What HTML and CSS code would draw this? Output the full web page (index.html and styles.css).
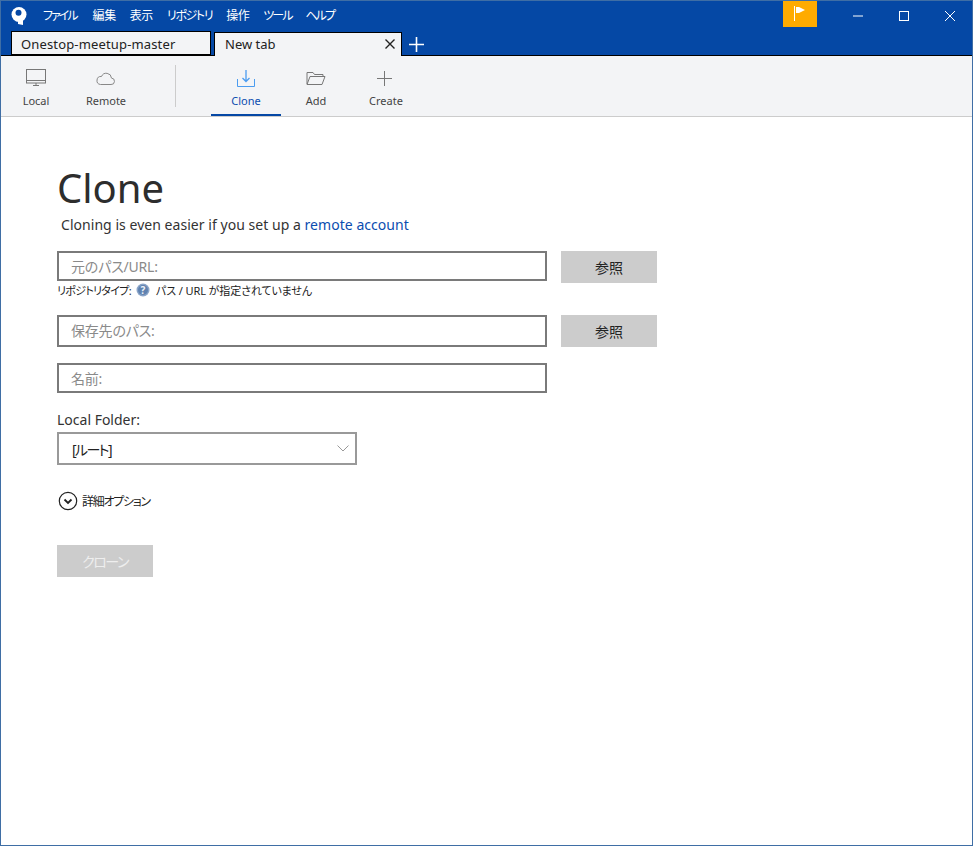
FILE: index.html
```html
<!DOCTYPE html>
<html lang="ja">
  <head>
    <title>Sourcetree</title>
    <link rel="stylesheet" href="styles.css">
  </head>
  <body>
    <div class="window">
      <div class="titlebar">
        <svg class="logo" width="16" height="18" viewBox="0 0 16 18">
          <circle cx="8" cy="7.500" r="7.500" fill="#fff"/>
          <path d="M3 12l4 2v3l5 1v-6z" fill="#fff"/>
          <circle cx="7.500" cy="5.800" r="3" fill="#0548a5"/>
        </svg>
        <nav class="menu">
          <span class="kana kana-first">ファイル</span>
          <span class="kanji">編集</span>
          <span class="kanji">表示</span>
          <span class="kana-long">リポジトリ</span>
          <span class="kanji">操作</span>
          <span class="kana">ツール</span>
          <span class="kana">ヘルプ</span>
        </nav>
        <div class="flag">
          <svg width="12" height="15" viewBox="0 0 12 15">
            <path d="M0.500 0v15" stroke="#fff" fill="none"/>
            <path d="M2 1h3l6 3-6 3H2z" fill="#fff"/>
          </svg>
        </div>
        <div class="winbtns">
          <svg width="12" height="12" viewBox="0 0 12 12"><path d="M1 6h10" stroke="#fff" fill="none"/></svg>
          <svg width="12" height="12" viewBox="0 0 12 12"><rect x="1.500" y="1.500" width="9" height="9" stroke="#fff" fill="none"/></svg>
          <svg width="12" height="12" viewBox="0 0 12 12"><path d="M1 1l10 10M11 1L1 11" stroke="#fff" fill="none"/></svg>
        </div>
      </div>

      <div class="tabstrip">
        <div class="tab">Onestop-meetup-master</div>
        <div class="tab tab-active">
          <span>New tab</span>
          <svg width="12" height="12" viewBox="0 0 12 12"><path d="M1.500 1.500l9 9M10.500 1.500l-9 9" stroke="#222" stroke-width="1.400" fill="none"/></svg>
        </div>
        <svg class="addtab" width="15" height="15" viewBox="0 0 15 15"><path d="M7.500 0v15M0 7.500h15" stroke="#fff" stroke-width="1.600" fill="none"/></svg>
      </div>

      <div class="toolbar">
        <div class="toolgroup">
          <div class="tool">
            <div class="toolicon">
              <svg width="20" height="18" viewBox="0 0 20 18" fill="none" stroke="#777">
                <rect x="0.500" y="0.500" width="19" height="13.500"/>
                <path d="M0.500 11.500h19M7 16.500h6M10 14v2.500"/>
              </svg>
            </div>
            <span>Local</span>
          </div>
          <div class="tool">
            <div class="toolicon nudge-remote">
              <svg width="19" height="14" viewBox="0 0 19 14" fill="none" stroke="#888">
                <path d="M4.500 13.500h10.500a3.200 3.200 0 0 0 .5-6.400 5.200 5.200 0 0 0-10-1.600 4 4 0 0 0-1 8z"/>
              </svg>
            </div>
            <span>Remote</span>
          </div>
        </div>
        <div class="toolsep"></div>
        <div class="toolgroup">
          <div class="tool tool-on">
            <div class="toolicon">
              <svg width="18" height="17" viewBox="0 0 18 17" fill="none" stroke="#4b9cf0">
                <path d="M0.500 9v7.500h17V9"/>
                <path d="M9 0v11M5.500 8l3.500 3.500L12.500 8" stroke-width="1.300"/>
              </svg>
            </div>
            <span>Clone</span>
          </div>
          <div class="tool">
            <div class="toolicon">
              <svg width="20" height="14" viewBox="0 0 20 14" fill="none" stroke="#777">
                <path d="M1 13V1.500h6l1.500 2H17V5"/>
                <path d="M1 13.500l3-8h15l-3 8z"/>
              </svg>
            </div>
            <span>Add</span>
          </div>
          <div class="tool">
            <div class="toolicon nudge-create">
              <svg width="15" height="15" viewBox="0 0 15 15" fill="none" stroke="#777">
                <path d="M7.500 0v15M0 7.500h15"/>
              </svg>
            </div>
            <span>Create</span>
          </div>
        </div>
      </div>

      <main class="content">
        <h1>Clone</h1>
        <p class="hint">Cloning is even easier if you set up a <a href="#">remote account</a></p>

        <div class="row">
          <input class="field field-short" placeholder="元のパス/URL:">
          <button class="browse">参照</button>
        </div>
        <div class="repotype">
          <span class="repolabel">リポジトリタイプ:</span>
          <svg width="14" height="14" viewBox="0 0 14 14">
            <circle cx="7" cy="7" r="6.500" fill="#8aa4c8"/>
            <circle cx="7" cy="7" r="5" fill="#5f82b0"/>
            <text x="7" y="10.500" text-anchor="middle" class="qmark">?</text>
          </svg>
          <span class="repostatus">パス / URL が指定されていません</span>
        </div>
        <div class="row">
          <input class="field" placeholder="保存先のパス:">
          <button class="browse">参照</button>
        </div>
        <div class="row row-name">
          <input class="field field-short" placeholder="名前:">
        </div>

        <label class="folderlabel">Local Folder:</label>
        <div class="select">
          <span class="selected">[ルート]</span>
          <svg width="12" height="7" viewBox="0 0 12 7"><path d="M0.500 0.500L6 6l5.500-5.500" stroke="#999" fill="none"/></svg>
        </div>

        <div class="advanced">
          <svg width="20" height="20" viewBox="0 0 20 20" fill="none" stroke="#222">
            <circle cx="10" cy="10" r="8.700" stroke-width="1.200"/>
            <path d="M6.500 8.500L10 12l3.500-3.500" stroke-width="1.800"/>
          </svg>
          <span>詳細オプション</span>
        </div>

        <button class="clonebtn" disabled>クローン</button>
      </main>
    </div>
  </body>
</html>
```

FILE: styles.css
```css
* {
  box-sizing: border-box;
}

html, body {
  margin: 0;
  height: 100%;
}

body {
  font-family: "Noto Sans", "Noto Sans CJK JP", sans-serif;
  font-feature-settings: "palt";
  background-color: #fff;
  color: #333;
}

.window {
  height: 846px;
  border: 1px solid #3f6ea5;
  display: flex;
  flex-direction: column;
}

.titlebar {
  background-color: #0548a5;
  height: 31px;
  flex: none;
  display: flex;
  align-items: flex-start;
  color: #fff;
}

.logo {
  margin: 6px 0 0 10px;
}

.menu {
  display: flex;
  gap: 14px;
  margin: 6px 0 0 16px;
  font-size: 12px;
  line-height: 18px;
  flex: 1;
}

.kana {
  letter-spacing: -2px;
}

.kana-first {
  margin-right: 2px;
}

.kana-long {
  letter-spacing: -1.400px;
}

.kanji {
  letter-spacing: -0.400px;
}

.flag {
  width: 34px;
  height: 26px;
  background-color: #ffab00;
  display: flex;
  justify-content: center;
  align-items: flex-start;
  padding-top: 5px;
}

.flag svg {
  margin-left: -1px;
}

.winbtns {
  display: flex;
  gap: 34px;
  padding: 9px 16px 0 35px;
}

.tabstrip {
  background-color: #0548a5;
  height: 24px;
  flex: none;
  display: flex;
  align-items: flex-end;
  padding-left: 10px;
  gap: 3px;
  border-bottom: 1px solid #000;
}

.tab {
  width: 200px;
  height: 24px;
  background-color: #f3f4f6;
  border: 1px solid #000;
  font-size: 13px;
  line-height: 24px;
  letter-spacing: 0.150px;
  padding-left: 9px;
  color: #222;
}

.tab-active {
  width: 188px;
  border-bottom: 0;
  padding-left: 10px;
  padding-right: 5px;
  padding-bottom: 1px;
  margin-bottom: -1px;
  letter-spacing: 0;
  display: flex;
  justify-content: space-between;
  align-items: center;
}

.addtab {
  margin: 0 0 3px 4px;
}

.toolbar {
  background-color: #f3f4f6;
  height: 61px;
  flex: none;
  display: flex;
  border-bottom: 1px solid #ccc;
}

.toolgroup {
  display: flex;
}

.tool {
  width: 70px;
  height: 60px;
  display: flex;
  flex-direction: column;
  align-items: center;
  padding-top: 12px;
  gap: 5px;
  font-size: 11px;
  line-height: 15px;
  color: #444;
}

.toolicon {
  height: 20px;
  display: flex;
  align-items: center;
  justify-content: center;
}

.nudge-remote {
  margin-right: 2px;
}

.nudge-create {
  margin-right: 3px;
}

.tool-on {
  border-bottom: 2px solid #0548a5;
  color: #0b4db0;
}

.toolsep {
  width: 1px;
  height: 42px;
  margin: 9px 35px 0 34px;
  background-color: #ccc;
}

.content {
  flex: 1;
  padding: 44px 0 0 56px;
}

h1 {
  margin: 0;
  font-size: 40px;
  font-weight: 400;
  line-height: 54px;
  color: #2d2d2d;
}

.hint {
  margin: 0 0 16px 4px;
  font-size: 14px;
  line-height: 20px;
  letter-spacing: 0.040px;
  color: #333;
}

.hint a {
  color: #0b4db0;
  text-decoration: none;
}

.row {
  display: flex;
  gap: 14px;
  align-items: flex-start;
}

.field {
  width: 490px;
  height: 32px;
  border: 2px solid #7a7a7a;
  padding: 0 12px 2px;
  font: inherit;
  font-size: 14px;
  font-feature-settings: "palt";
  letter-spacing: -0.200px;
  background-color: #fff;
  outline: none;
}

.field-short {
  height: 30px;
  padding-bottom: 0;
}

.field::placeholder {
  color: #8a8a8a;
  opacity: 1;
}

.browse {
  width: 96px;
  height: 32px;
  border: 0;
  background-color: #ccc;
  font: inherit;
  font-size: 14px;
  color: #222;
}

.repotype {
  display: flex;
  align-items: center;
  gap: 5px;
  height: 20px;
  margin-top: -3px;
  margin-bottom: 15px;
  font-size: 11px;
  color: #222;
}

.repolabel {
  letter-spacing: -0.700px;
}

.repostatus {
  margin-left: 1px;
  letter-spacing: -0.100px;
}

.qmark {
  font-size: 10px;
  font-weight: 700;
  fill: #eef2f8;
}

.row-name {
  margin-top: 16px;
}

.folderlabel {
  display: block;
  margin-top: 17px;
  font-size: 14px;
  line-height: 20px;
  color: #333;
}

.select {
  width: 300px;
  height: 33px;
  margin-top: 2px;
  border: 2px solid #999;
  padding: 0 6px 0 13px;
  display: flex;
  justify-content: space-between;
  align-items: center;
  font-size: 14px;
  color: #222;
}

.selected {
  letter-spacing: -1.600px;
}

.advanced {
  display: flex;
  align-items: center;
  gap: 4px;
  height: 20px;
  margin-top: 26px;
  margin-left: 1px;
  font-size: 12px;
  letter-spacing: -1.300px;
  color: #222;
}

.clonebtn {
  display: block;
  width: 96px;
  height: 32px;
  margin-top: 34px;
  border: 0;
  background-color: #ccc;
  color: #eee;
  font: inherit;
  font-size: 14px;
  letter-spacing: -1.500px;
}
```
